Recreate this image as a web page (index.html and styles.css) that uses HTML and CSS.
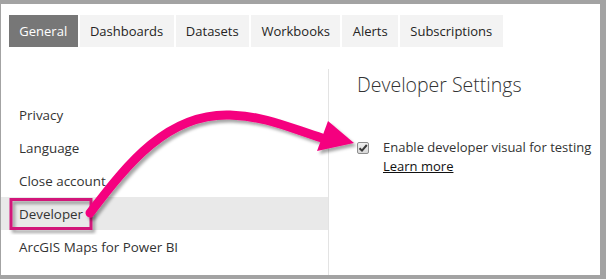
FILE: index.html
```html
<!DOCTYPE html>
<html>
<head>
<meta charset="utf-8">
<link rel="stylesheet" href="styles.css">
</head>
<body>
<div class="frame">
  <nav class="tabs">
    <span class="tab active">General</span>
    <span class="tab">Dashboards</span>
    <span class="tab">Datasets</span>
    <span class="tab">Workbooks</span>
    <span class="tab">Alerts</span>
    <span class="tab">Subscriptions</span>
  </nav>
  <div class="main">
    <ul class="menu">
      <li class="item">Privacy</li>
      <li class="item">Language</li>
      <li class="item">Close account</li>
      <li class="item selected">Developer</li>
      <li class="item">ArcGIS Maps for Power BI</li>
    </ul>
    <section class="panel">
      <h1 class="title">Developer Settings</h1>
      <div class="option">
        <span class="check"><svg width="10" height="10" viewBox="0 0 10 10"><path d="M1.5 5.2 L4 7.6 L8.8 2" fill="none" stroke="#3a3a3a" stroke-width="2"/></svg></span>
        <div class="label">
          <div>Enable developer visual for testing</div>
          <a class="link">Learn more</a>
        </div>
      </div>
    </section>
  </div>
</div>
<svg class="overlay" width="606" height="279" viewBox="0 0 606 279">
  <defs>
    <filter id="sh" x="-20%" y="-20%" width="140%" height="140%">
      <feDropShadow dx="2.5" dy="3" stdDeviation="1.8" flood-color="#000" flood-opacity="0.35"/>
    </filter>
  </defs>
  <rect x="11" y="199.5" width="80" height="29" fill="none" stroke="#d2157a" stroke-width="3" filter="url(#sh)"/>
  <g filter="url(#sh)">
    <path d="M90 213 C 128 163, 168 113, 230 115 C 265 116, 290 128, 322 138" fill="none" stroke="#f5037f" stroke-width="9" stroke-linecap="round"/>
    <polygon points="328,121 317,151 354,143" fill="#f5037f"/>
  </g>
</svg>
</body>
</html>
```
FILE: styles.css
```css
html, body {
  margin: 0;
  padding: 0;
}
body {
  position: relative;
  width: 606px;
  height: 279px;
  font-family: "Open Sans", "Noto Sans", sans-serif;
  color: #333;
  overflow: hidden;
}
.frame {
  box-sizing: border-box;
  width: 606px;
  height: 279px;
  border-style: solid;
  border-color: #a3a3a3;
  border-width: 4px 6px 4px 1px;
  background: #fff;
  display: flex;
  flex-direction: column;
}
.tabs {
  display: flex;
  gap: 2px;
  padding: 11px 0 0 8px;
}
.tab {
  height: 32px;
  display: flex;
  align-items: center;
  padding: 0 10.35px;
  background: #f3f3f3;
  font-size: 13px;
  color: #252423;
}
.tab.active {
  background: #777;
  color: #fff;
}
.main {
  flex: 1;
  display: flex;
  margin-top: 22px;
}
.menu {
  list-style: none;
  margin: 0;
  padding: 29px 0 0 0;
  width: 327px;
}
.item {
  height: 33px;
  display: flex;
  align-items: center;
  padding-left: 18px;
  font-size: 13.4px;
  color: #333;
}
.item.selected {
  background: #e9e9e9;
}
.panel {
  flex: 1;
  border-left: 1px solid #e3e3e3;
  padding: 3px 0 0 28px;
}
.title {
  margin: 0;
  font-size: 19.5px;
  font-weight: 300;
  line-height: 26px;
  color: #333;
}
.option {
  display: flex;
  margin-top: 40px;
  gap: 14px;
}
.check {
  box-sizing: border-box;
  width: 12px;
  height: 12px;
  margin-top: 4px;
  border: 1px solid #8e8e8e;
  border-radius: 2px;
  background: linear-gradient(#f0f0f0, #d8d8d8);
  display: flex;
  align-items: center;
  justify-content: center;
}
.label {
  font-size: 13px;
  line-height: 19px;
  color: #333;
}
.link {
  color: #111;
  text-decoration: underline;
}
.overlay {
  position: absolute;
  left: 0;
  top: 0;
}
```
